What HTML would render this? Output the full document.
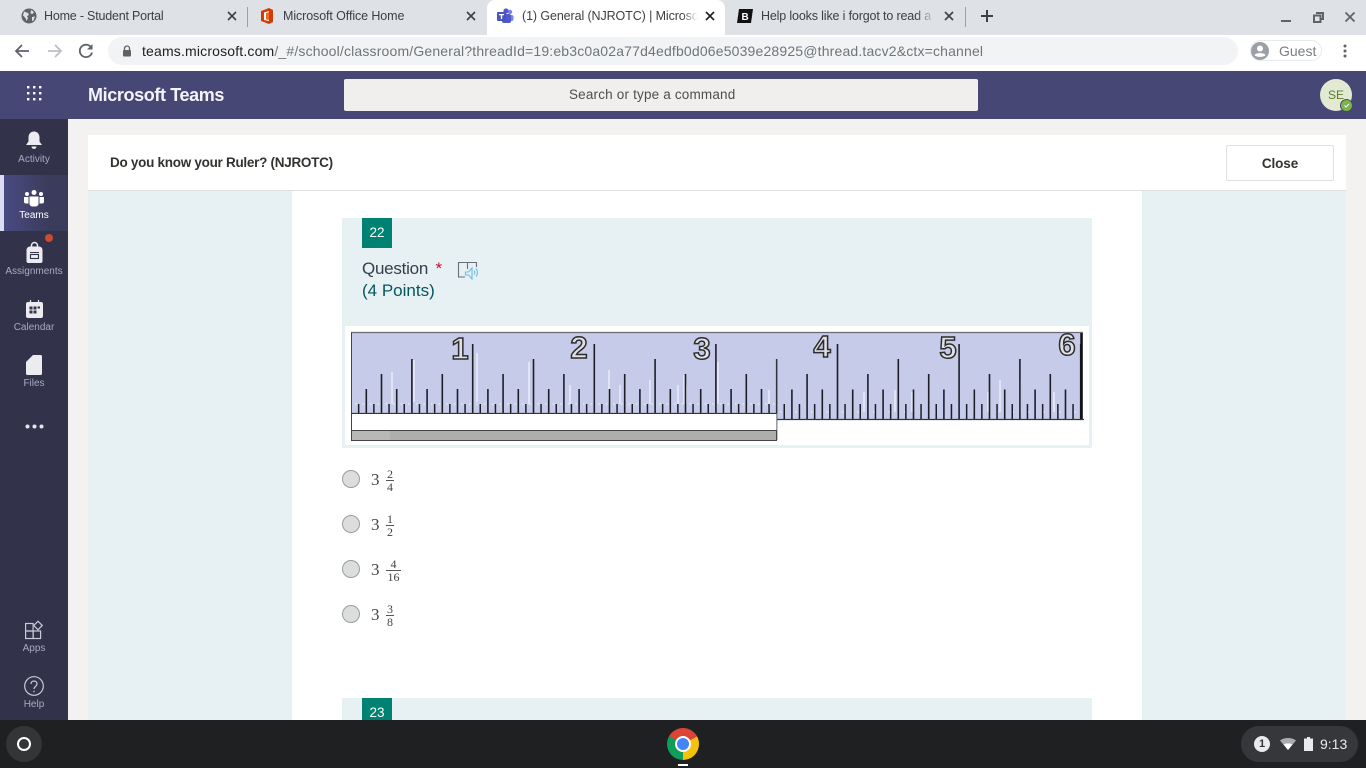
<!DOCTYPE html>
<html lang="en"><head><meta charset="utf-8"><title>Microsoft Teams</title>
<style>
html,body{margin:0;padding:0}
body{width:1366px;height:768px;overflow:hidden;position:relative;background:#e7f0f3;font-family:"Liberation Sans",sans-serif}
.a{position:absolute}
.t{position:absolute;white-space:nowrap}
svg{position:absolute;overflow:visible}
.tab{font-size:12.5px;color:#3c4043;top:8px;line-height:16px;overflow:hidden}
.lab{position:absolute;left:0;width:68px;text-align:center;font-size:10px;color:#a8a9c2;line-height:12px}
.frac{font-family:"Liberation Serif",serif;color:#444}
</style></head><body>

<!-- browser tab strip -->
<div class="a" style="left:0;top:0;width:1366px;height:35px;background:#dee1e6"></div>
<div class="a" style="left:487px;top:0;width:238px;height:35px;background:#fff;border-radius:8px 8px 0 0"></div>
<div class="a" style="left:247px;top:7px;width:1px;height:20px;background:#9aa0a6"></div>
<div class="a" style="left:965px;top:7px;width:1px;height:20px;background:#9aa0a6"></div>

<svg style="left:21px;top:8px" width="16" height="16" viewBox="0 0 16 16"><circle cx="8" cy="8" r="7.5" fill="#5f6368"/><path d="M3 3.500l4 1.500 1 2-2 1 1 2-1.500 3-1-3-2.500-2.500zM10 2l3 2-1.500 2-2-.5zM11 9l3-.5-1.500 4-1.500 .5z" fill="#dee1e6"/></svg>
<div class="t tab" style="left:44px;width:180px;letter-spacing:-.2px">Home - Student Portal</div>
<svg style="left:227px;top:11px" width="10" height="10"><path d="M1 1l8 8M9 1l-8 8" stroke="#3c4043" stroke-width="1.600"/></svg>

<svg style="left:260px;top:8px" width="14" height="16" viewBox="0 0 14 16"><path d="M1 3L9 0l4 2v12l-4 2-8-3z" fill="#d83b01"/><path d="M4 4.500L9 3v10l-5-1z" fill="#fff"/><path d="M6 5l3-1v8l-3-.5z" fill="#eb6c2c"/></svg>
<div class="t tab" style="left:283px;width:180px;letter-spacing:-.1px">Microsoft Office Home</div>
<svg style="left:466px;top:11px" width="10" height="10"><path d="M1 1l8 8M9 1l-8 8" stroke="#3c4043" stroke-width="1.600"/></svg>

<svg style="left:497px;top:8px" width="17" height="16" viewBox="0 0 17 16"><circle cx="13" cy="4" r="2.200" fill="#7b83eb"/><rect x="10" y="7" width="6.500" height="6" rx="2" fill="#7b83eb"/><circle cx="9" cy="3" r="2.600" fill="#5059c9"/><rect x="5" y="6" width="9" height="9" rx="2" fill="#5059c9"/><rect x="0" y="4" width="9" height="9" rx="1" fill="#4b53bc"/><path d="M2 6h5v1.200H5.200V11H3.800V7.200H2z" fill="#fff"/></svg>
<div class="t tab" style="left:522px;width:176px;letter-spacing:-.1px;-webkit-mask-image:linear-gradient(90deg,#000 160px,transparent 176px);mask-image:linear-gradient(90deg,#000 160px,transparent 176px)">(1) General (NJROTC) | Microsoft Teams</div>
<svg style="left:705px;top:11px" width="10" height="10"><path d="M1 1l8 8M9 1l-8 8" stroke="#202124" stroke-width="1.600"/></svg>

<svg style="left:737px;top:8px" width="16" height="16" viewBox="0 0 16 16"><path d="M2 1h14l-2 14H0z" fill="#111"/><text x="4.500" y="12" font-size="10" font-weight="bold" fill="#fff" font-family="Liberation Sans">B</text></svg>
<div class="t tab" style="left:761px;width:174px;letter-spacing:-.15px;-webkit-mask-image:linear-gradient(90deg,#000 155px,transparent 174px);mask-image:linear-gradient(90deg,#000 155px,transparent 174px)">Help looks like i forgot to read a book</div>
<svg style="left:944px;top:11px" width="10" height="10"><path d="M1 1l8 8M9 1l-8 8" stroke="#3c4043" stroke-width="1.600"/></svg>

<svg style="left:980px;top:9px" width="14" height="14"><path d="M7 1v12M1 7h12" stroke="#3c4043" stroke-width="2"/></svg>

<!-- window controls -->
<div class="a" style="left:1281px;top:20px;width:10px;height:2px;background:#5f6368"></div>
<svg style="left:1313px;top:12px" width="11" height="11"><path d="M3 1h7v6H8M1 3.500h6.500V10H1z" fill="none" stroke="#5f6368" stroke-width="2"/></svg>
<svg style="left:1345px;top:12px" width="10" height="10"><path d="M.5.500l9 9M9.500.500l-9 9" stroke="#5f6368" stroke-width="1.800"/></svg>

<!-- toolbar -->
<div class="a" style="left:0;top:35px;width:1366px;height:36px;background:#fff"></div>
<svg style="left:14px;top:43px" width="16" height="16"><path d="M15 8H2M8 2L2 8l6 6" fill="none" stroke="#5f6368" stroke-width="1.800"/></svg>
<svg style="left:47px;top:43px" width="16" height="16"><path d="M1 8h13M8 2l6 6-6 6" fill="none" stroke="#bcc0c4" stroke-width="1.800"/></svg>
<svg style="left:78px;top:43px" width="16" height="16" viewBox="0 0 16 16"><path d="M13.500 5A6.200 6.200 0 1 0 14 9.500" fill="none" stroke="#5f6368" stroke-width="1.800"/><path d="M14.500 1v5.500H9z" fill="#5f6368"/></svg>
<div class="a" style="left:108px;top:37px;width:1130px;height:28px;border-radius:14px;background:#f1f3f4"></div>
<svg style="left:122px;top:45px" width="10" height="12"><path d="M2.500 5V3.500a2.500 2.500 0 0 1 5 0V5" fill="none" stroke="#5f6368" stroke-width="1.300"/><rect x="1" y="5" width="8" height="6.500" rx="1" fill="#5f6368"/></svg>
<div class="t" style="left:142px;top:43px;font-size:14px;line-height:16px;color:#70757a;letter-spacing:.17px"><span style="color:#202124">teams.microsoft.com</span>/_#/school/classroom/General?threadId=19:eb3c0a02a77d4edfb0d06e5039e28925@thread.tacv2&amp;ctx=channel</div>
<div class="a" style="left:1250px;top:40px;width:72px;height:21px;border:1px solid #e8eaed;border-radius:12px;box-sizing:border-box"></div>
<svg style="left:1251px;top:42px" width="18" height="18" viewBox="0 0 18 18"><circle cx="9" cy="9" r="9" fill="#9aa0a6"/><circle cx="9" cy="6.500" r="3" fill="#fff"/><path d="M3.500 13c1.500-2.500 9.500-2.500 11 0-1.500 2.500-9.500 2.500-11 0z" fill="#fff"/></svg>
<div class="t" style="left:1279px;top:43px;font-size:14px;line-height:16px;color:#7b7e83">Guest</div>
<svg style="left:1343px;top:44px" width="4" height="14"><circle cx="2" cy="2" r="1.500" fill="#5f6368"/><circle cx="2" cy="7" r="1.500" fill="#5f6368"/><circle cx="2" cy="12" r="1.500" fill="#5f6368"/></svg>

<!-- teams header -->
<div class="a" style="left:0;top:71px;width:1366px;height:48px;background:#464775"></div>
<svg style="left:27px;top:86px" width="15" height="15"><g fill="#fff"><rect x="0" y="0" width="2.400" height="2.400"/><rect x="6" y="0" width="2.400" height="2.400"/><rect x="12" y="0" width="2.400" height="2.400"/><rect x="0" y="6" width="2.400" height="2.400"/><rect x="6" y="6" width="2.400" height="2.400"/><rect x="12" y="6" width="2.400" height="2.400"/><rect x="0" y="12" width="2.400" height="2.400"/><rect x="6" y="12" width="2.400" height="2.400"/><rect x="12" y="12" width="2.400" height="2.400"/></g></svg>
<div class="t" style="left:88px;top:85px;font-size:18px;line-height:21px;font-weight:bold;color:#f3f3f8;letter-spacing:-.38px">Microsoft Teams</div>
<div class="a" style="left:344px;top:79px;width:634px;height:32px;background:#f0efee;border-radius:2px"></div>
<div class="t" style="left:569px;top:87px;font-size:13.500px;line-height:16px;color:#4f4e4d;letter-spacing:.18px">Search or type a command</div>
<div class="a" style="left:1320px;top:79px;width:32px;height:32px;border-radius:50%;background:#e3ead4"></div>
<div class="t" style="left:1320px;top:88px;width:32px;text-align:center;font-size:12px;line-height:14px;color:#5f7a2a">SE</div>
<div class="a" style="left:1340px;top:99px;width:13px;height:13px;border-radius:50%;border:1.500px solid #464775;box-sizing:border-box;background:#7ab648"></div>
<svg style="left:1344px;top:103px" width="6" height="5"><path d="M.5 2.500l1.500 1.500L5 1" fill="none" stroke="#fff" stroke-width="1"/></svg>

<!-- sidebar -->
<div class="a" style="left:0;top:119px;width:68px;height:601px;background:#32334b"></div>
<div class="a" style="left:0;top:175px;width:68px;height:56px;background:linear-gradient(90deg,#4a4c85,#3b3c5c 70%)"></div>
<div class="a" style="left:0;top:175px;width:4px;height:56px;background:#dcddf5"></div>

<svg style="left:25px;top:131px" width="18" height="20" viewBox="0 0 18 20"><path d="M9 0.500c3.500 0 5.500 2.500 5.500 6v4l2.500 3.500H1l2.500-3.500v-4C3.500 3 5.500.500 9 .500z" fill="#ecebf0"/><path d="M6.500 15.500h5a2.500 2.500 0 0 1-5 0z" fill="#ecebf0"/></svg>
<div class="lab" style="top:153.500px;top:154px">Activity</div>

<svg style="left:24px;top:190px" width="20" height="17" viewBox="0 0 20 17"><circle cx="10" cy="2.500" r="2.500" fill="#fff"/><circle cx="3" cy="4" r="2" fill="#fff"/><circle cx="17" cy="4" r="2" fill="#fff"/><path d="M0 7h4.500v6.500H2A2 2 0 0 1 0 11.500zM20 7h-4.500v6.500H18a2 2 0 0 0 2-2z" fill="#fff"/><path d="M5.500 6.500h9v6.500a3 3 0 0 1-3 3.500h-3a3 3 0 0 1-3-3.500z" fill="#fff"/></svg>
<div class="lab" style="top:210px;color:#fff">Teams</div>

<div class="a" style="left:45px;top:234px;width:8px;height:8px;border-radius:50%;background:#cc4a31"></div>
<svg style="left:26px;top:243px" width="17" height="21" viewBox="0 0 17 21"><path d="M5.500 4V2.500a3 3 0 0 1 6 0V4" fill="none" stroke="#ecebf0" stroke-width="1.500"/><path d="M4 3.500h9a3.500 3.500 0 0 1 3.500 3.500v11a2 2 0 0 1-2 2h-12a2 2 0 0 1-2-2V7A3.500 3.500 0 0 1 4 3.500z" fill="#ecebf0"/><path d="M4 9.500h9" stroke="#33344a" stroke-width="1"/><rect x="4.500" y="11.500" width="8" height="4" fill="none" stroke="#33344a" stroke-width="1.100"/></svg>
<div class="lab" style="top:266px">Assignments</div>

<svg style="left:26px;top:300px" width="17" height="18" viewBox="0 0 17 18"><rect x="0" y="2" width="17" height="16" rx="2" fill="#ecebf0"/><path d="M4.500 0v4M12.500 0v4" stroke="#ecebf0" stroke-width="1.200"/><g fill="#33344a"><rect x="3.500" y="6.500" width="3" height="3"/><rect x="7.500" y="6.500" width="3" height="3"/><rect x="11.500" y="6.500" width="2.500" height="2"/><rect x="3.500" y="10.500" width="3" height="3"/><rect x="7.500" y="10.500" width="3" height="3"/></g></svg>
<div class="lab" style="top:322px">Calendar</div>

<svg style="left:26px;top:355px" width="16" height="20" viewBox="0 0 16 20"><path d="M7 0h7.500A1.500 1.500 0 0 1 16 1.500v17a1.500 1.500 0 0 1-1.500 1.500h-13A1.500 1.500 0 0 1 0 18.500V7z" fill="#ecebf0"/></svg>
<div class="lab" style="top:378px">Files</div>

<svg style="left:25px;top:424px" width="19" height="5"><g fill="#e4e4ec"><circle cx="2.500" cy="2.500" r="2"/><circle cx="9.500" cy="2.500" r="2"/><circle cx="16.500" cy="2.500" r="2"/></g></svg>

<svg style="left:25px;top:620px" width="19" height="19" viewBox="0 0 19 19" fill="none" stroke="#c9c9d8" stroke-width="1.200"><rect x=".6" y="3.500" width="7.500" height="7.500"/><rect x=".6" y="11" width="7.500" height="7.500"/><rect x="8.100" y="11" width="7.500" height="7.500"/><rect x="10" y="2.500" width="6" height="6" transform="rotate(45 13 5.500)"/></svg>
<div class="lab" style="top:643px">Apps</div>

<svg style="left:24px;top:676px" width="20" height="20" viewBox="0 0 20 20"><circle cx="10" cy="10" r="9.300" fill="none" stroke="#c9c9d8" stroke-width="1.200"/><path d="M7 8c0-4 6-4 6 0 0 2.500-3 2.500-3 5" fill="none" stroke="#c9c9d8" stroke-width="1.200"/><circle cx="10" cy="15.500" r=".8" fill="#c9c9d8"/></svg>
<div class="lab" style="top:699px">Help</div>

<!-- content -->
<div class="a" style="left:68px;top:119px;width:1298px;height:601px;background:#f3f2f1"></div>
<div class="a" style="left:88px;top:190px;width:1258px;height:530px;background:#e7f0f3"></div>
<div class="a" style="left:292px;top:190px;width:850px;height:530px;background:#fff"></div>
<div class="a" style="left:88px;top:135px;width:1258px;height:55px;background:#fff;border-bottom:1px solid #e1dfdd;box-sizing:content-box"></div>
<div class="t" style="left:110px;top:154px;font-size:13.500px;line-height:17px;font-weight:bold;color:#33322f;letter-spacing:-.28px">Do you know your Ruler? (NJROTC)</div>
<div class="a" style="left:1226px;top:145px;width:108px;height:36px;border:1px solid #e1dfdd;box-sizing:border-box;border-radius:2px;background:#fff"></div>
<div class="t" style="left:1226px;top:155px;width:108px;text-align:center;font-size:13.500px;line-height:17px;font-weight:bold;color:#33322f;letter-spacing:-.1px">Close</div>

<!-- question 22 -->
<div class="a" style="left:342px;top:218px;width:750px;height:107px;background:#e7f0f3"></div>
<div class="a" style="left:362px;top:218px;width:30px;height:30px;background:#008272"></div>
<div class="t" style="left:362px;top:225px;width:30px;text-align:center;font-size:13.500px;line-height:16px;color:#fff">22</div>
<div class="t" style="left:362px;top:259px;font-size:17px;line-height:20px;color:#333f48;letter-spacing:-.25px">Question <span style="color:#c8102e;margin-left:3px">*</span></div>
<div class="t" style="left:362px;top:281px;font-size:17px;line-height:20px;color:#04565f">(4 Points)</div>
<svg style="left:458px;top:261px" width="21" height="18" viewBox="0 0 21 18"><path d="M7 16H.5V1.500h18V6M9.500 1.500V8" fill="none" stroke="#66707a" stroke-width="1.100"/><path d="M7.500 11h3l3.500-4v11l-3.500-4h-3z" fill="none" stroke="#6cbfe2" stroke-width="1.100"/><path d="M16 9.500c1 1 1 3 0 4M18 7.500c1.800 2 1.800 6 0 8" fill="none" stroke="#6cbfe2" stroke-width="1.100"/></svg>

<div class="a" style="left:342px;top:325px;width:750px;height:123px;background:#e7f0f3"></div>
<div class="a" style="left:345px;top:326px;width:744px;height:119px;background:#fff"></div>

<svg style="left:0;top:0" width="1366" height="768" viewBox="0 0 1366 768">
<!-- ruler body -->
<path d="M351.500 333H1083V419.500H777V413H351.500z" fill="#c5cbe8"/>
<path d="M351 332.500H1083" stroke="#6a6a72" stroke-width="1.300"/>
<path d="M351.500 332.500V440" stroke="#444" stroke-width="1"/>
<!-- white ghosts -->
<g stroke="#e8ebf8" stroke-width="1.600" fill="none">
<path d="M477 353V402M414 360V402M529 362V404M392 372V404M570 385V404M594 400V404M609 370V404M678 385V404M686 385V404M620 385V404M718 362V404M650 380V404M684 375V404M769 390V404M864 392V412M912 392V412M895 390V412M988 392V412M974 390V412M1020 380V412M1054 392V412M1000 380V412"/>
</g>
<g stroke="#dfe3f5" stroke-width="2" fill="none" stroke-dasharray="1.500 6.100"><path d="M355 404H776"/><path d="M780 412H1080" stroke-dasharray="1.500 14"/></g>
<!-- left segment ticks -->
<g stroke="#1d1e28" fill="none">
<path d="M357.900 408.500H777.300" stroke-width="9" stroke-dasharray="1.500 13.700"/>
<path d="M365.500 401H777.300" stroke-width="24" stroke-dasharray="1.600 28.800"/>
<path d="M380.700 393.500H777.300" stroke-width="39" stroke-dasharray="1.600 59.200"/>
<path d="M411.100 386H777.300" stroke-width="54" stroke-dasharray="1.600 120"/>
<path d="M471.900 378.500H777.300" stroke-width="69" stroke-dasharray="1.600 120"/>
</g>
<!-- right segment ticks -->
<g stroke="#1d1e28" fill="none">
<path d="M783.500 411.500H1083" stroke-width="15" stroke-dasharray="1.500 13.700"/>
<path d="M791.100 404.500H1083" stroke-width="30" stroke-dasharray="1.600 28.800"/>
<path d="M806.300 396.500H1083" stroke-width="45" stroke-dasharray="1.600 59.200"/>
<path d="M897.500 389H1083" stroke-width="60" stroke-dasharray="1.600 120"/>
<path d="M836.700 381.500H1083" stroke-width="75" stroke-dasharray="1.600 120"/>
</g>
<path d="M1081.500 333V419" stroke="#111" stroke-width="2.500"/>
<!-- baselines & lower bar -->
<path d="M351 413.500H777" stroke="#33343c" stroke-width="1.200"/>
<path d="M777 419.500H1084" stroke="#33343c" stroke-width="1.200"/>
<path d="M776.800 359V440" stroke="#3c3d44" stroke-width="1"/>
<rect x="352" y="414" width="424.500" height="16.500" fill="#fff"/>
<rect x="351.500" y="430.500" width="425" height="10" fill="#aeaeae" stroke="#444" stroke-width="1"/>
<rect x="352" y="431" width="38" height="9" fill="#b8b8b8"/>
<!-- numerals -->
<g font-family="Liberation Sans" font-weight="bold" font-size="31" fill="#dfe0e6" stroke="#2c2c2c" stroke-width="1.500" text-anchor="middle">
<text x="460" y="359">1</text><text x="579" y="358">2</text><text x="702" y="359">3</text><text x="822" y="357">4</text><text x="948" y="358">5</text><text x="1067" y="355">6</text>
</g>
</svg>

<!-- options -->
<div class="a" style="left:342px;top:470px;width:18px;height:18px;border-radius:50%;background:#dcdddd;border:1px solid #9a9c9e;box-sizing:border-box"></div>
<div class="a" style="left:342px;top:515px;width:18px;height:18px;border-radius:50%;background:#dcdddd;border:1px solid #9a9c9e;box-sizing:border-box"></div>
<div class="a" style="left:342px;top:560px;width:18px;height:18px;border-radius:50%;background:#dcdddd;border:1px solid #9a9c9e;box-sizing:border-box"></div>
<div class="a" style="left:342px;top:605px;width:18px;height:18px;border-radius:50%;background:#dcdddd;border:1px solid #9a9c9e;box-sizing:border-box"></div>

<div class="t frac" style="left:371px;top:470px;font-size:17px;line-height:19px">3</div>
<div class="t frac" style="left:386px;top:468px;width:8px;text-align:center;font-size:12px;line-height:12px">2</div>
<div class="a" style="left:386px;top:480px;width:8px;height:1px;background:#555"></div>
<div class="t frac" style="left:386px;top:481px;width:8px;text-align:center;font-size:12px;line-height:12px">4</div>

<div class="t frac" style="left:371px;top:515px;font-size:17px;line-height:19px">3</div>
<div class="t frac" style="left:386px;top:513px;width:8px;text-align:center;font-size:12px;line-height:12px">1</div>
<div class="a" style="left:386px;top:525px;width:8px;height:1px;background:#555"></div>
<div class="t frac" style="left:386px;top:526px;width:8px;text-align:center;font-size:12px;line-height:12px">2</div>

<div class="t frac" style="left:371px;top:560px;font-size:17px;line-height:19px">3</div>
<div class="t frac" style="left:386px;top:558px;width:15px;text-align:center;font-size:12px;line-height:12px">4</div>
<div class="a" style="left:386px;top:570px;width:15px;height:1px;background:#555"></div>
<div class="t frac" style="left:386px;top:571px;width:15px;text-align:center;font-size:12px;line-height:12px">16</div>

<div class="t frac" style="left:371px;top:605px;font-size:17px;line-height:19px">3</div>
<div class="t frac" style="left:386px;top:603px;width:8px;text-align:center;font-size:12px;line-height:12px">3</div>
<div class="a" style="left:386px;top:615px;width:8px;height:1px;background:#555"></div>
<div class="t frac" style="left:386px;top:616px;width:8px;text-align:center;font-size:12px;line-height:12px">8</div>

<!-- question 23 -->
<div class="a" style="left:342px;top:698px;width:750px;height:22px;background:#e7f0f3"></div>
<div class="a" style="left:362px;top:698px;width:30px;height:22px;background:#008272"></div>
<div class="t" style="left:362px;top:705px;width:30px;text-align:center;font-size:13.500px;line-height:16px;color:#fff">23</div>

<!-- shelf -->
<div class="a" style="left:0;top:720px;width:1366px;height:48px;background:#1f2022"></div>
<div class="a" style="left:6px;top:726px;width:36px;height:36px;border-radius:50%;background:#343537"></div>
<div class="a" style="left:17px;top:737px;width:14px;height:14px;border-radius:50%;border:2px solid #fff;box-sizing:border-box"></div>
<div class="a" style="left:667px;top:728px;width:32px;height:32px;border-radius:50%;background:conic-gradient(#db4437 0deg 62deg,#f4c20d 62deg 180deg,#0f9d58 180deg 300deg,#db4437 300deg)"></div>
<div class="a" style="left:675px;top:736px;width:16px;height:16px;border-radius:50%;background:#4285f4;border:2px solid #fff;box-sizing:border-box"></div>
<div class="a" style="left:678px;top:764px;width:10px;height:2px;background:#fff"></div>
<div class="a" style="left:1241px;top:726px;width:117px;height:36px;border-radius:18px;background:#36373a"></div>
<div class="a" style="left:1254px;top:736px;width:16px;height:16px;border-radius:50%;background:#e8eaed"></div>
<div class="t" style="left:1254px;top:738px;width:16px;text-align:center;font-size:11px;line-height:12px;color:#333;font-weight:bold">1</div>
<svg style="left:1280px;top:738px" width="16" height="12"><path d="M0 2.500C4-.800 12-.800 16 2.500L8 12z" fill="#e8eaed" opacity=".65"/><path d="M3.500 6.500c2.500-1.500 6.500-1.500 9 0L8 12z" fill="#fff"/></svg>
<svg style="left:1304px;top:737px" width="9" height="14"><path d="M3 0h3v1.500h3V14H0V1.500h3z" fill="#e8eaed"/></svg>
<div class="t" style="left:1320px;top:736px;font-size:14px;line-height:16px;color:#e8eaed">9:13</div>
</body></html>
